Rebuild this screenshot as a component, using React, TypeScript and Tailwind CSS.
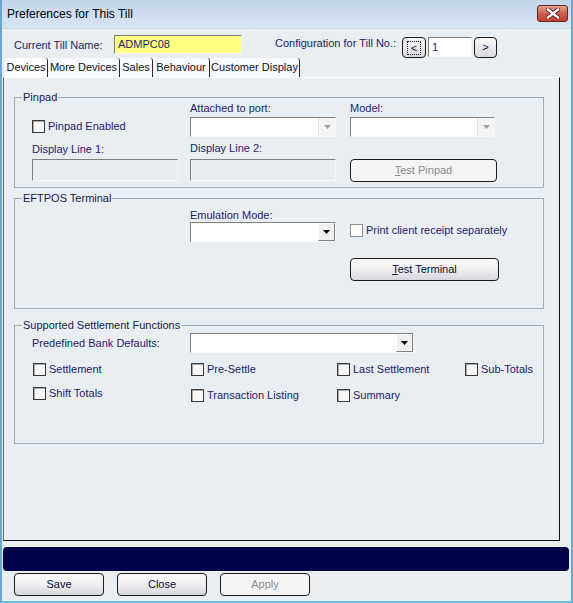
import React from 'react';

// Preferences for This Till — classic WinForms style dialog

const labelCls = 'text-[11px] leading-[13px] text-[#1d1d6b] whitespace-nowrap';
const sunken =
  'border border-t-[#7f7f7f] border-l-[#7f7f7f] border-b-[#f5f7f9] border-r-[#f5f7f9]';

function Check({ light }: { light?: boolean }) {
  return (
    <span
      className={
        light
          ? 'block w-[13px] h-[13px] shrink-0 border border-[#8e8e8e] bg-white'
          : 'block w-[13px] h-[13px] shrink-0 border border-[#3a3a3a] bg-[#f7f7f7] shadow-[inset_1px_1px_0_#a8a8a8]'
      }
    />
  );
}

function CheckItem({ label, className = '' }: { label: string; className?: string }) {
  return (
    <div className={'flex items-center gap-[3px] ' + className}>
      <Check />
      <span className={labelCls}>{label}</span>
    </div>
  );
}

function Combo({ width, disabled }: { width: string; disabled?: boolean }) {
  return (
    <div className={`${width} h-[20px] flex bg-white ${sunken}`}>
      <div className="flex-1" />
      <div
        className={
          disabled
            ? 'w-[17px] h-full flex items-center justify-center bg-[#f4f4f4] border-l border-[#e2e2e2]'
            : 'w-[17px] h-full flex items-center justify-center bg-[#f0f0f0] border border-t-white border-l-white border-b-[#808080] border-r-[#808080]'
        }
      >
        <svg width="7" height="4" viewBox="0 0 7 4">
          <path d="M0 0 L7 0 L3.5 4 Z" fill={disabled ? '#a0a0a0' : '#000'} />
        </svg>
      </div>
    </div>
  );
}

function WinButton({
  children,
  width,
  disabled,
  className = '',
}: {
  children: React.ReactNode;
  width: string;
  disabled?: boolean;
  className?: string;
}) {
  return (
    <div
      className={
        `${width} h-[23px] shrink-0 rounded-[4px] border border-[#1c1c1c] flex items-center justify-center text-[11px] ${className} ` +
        (disabled
          ? 'bg-[#f4f4f4] text-[#8d8d8d]'
          : 'bg-gradient-to-b from-[#fafafa] via-[#eeeef0] to-[#d6d6de] text-[#0c0c3c]')
      }
    >
      {children}
    </div>
  );
}

function GroupBox({
  title,
  className = '',
  children,
}: {
  title: string;
  className?: string;
  children: React.ReactNode;
}) {
  return (
    <fieldset className={'ml-[10px] w-[530px] border border-[#a3abb4] ' + className}>
      <legend className="ml-[7px] px-[1px] text-[11px] leading-[12px] text-[#1a1a4a]">{title}</legend>
      {children}
    </fieldset>
  );
}

const tabs = [
  { label: 'Devices', w: 'w-[43px]', active: true },
  { label: 'More Devices', w: 'w-[72px]' },
  { label: 'Sales', w: 'w-[33px]' },
  { label: 'Behaviour', w: 'w-[57px]' },
  { label: 'Customer Display', w: 'w-[90px]' },
];

export default function App() {
  return (
    <div className="w-[573px] h-[603px] bg-[#e9eef3] flex flex-col border-x-2 border-b-2 border-x-[#6aa7d4] border-b-[#5fc0e0] font-['Liberation_Sans',Arial,sans-serif] overflow-hidden">
      {/* title bar */}
      <div className="h-[29px] shrink-0 flex justify-between bg-gradient-to-b from-[#c2d5eb] to-[#d9e5f2] border-b border-[#c9d7e6]">
        <span className="ml-[5px] mt-[7px] text-[12px] leading-[14px] text-black">Preferences for This Till</span>
        <div className="mr-[3px] mt-[5px] w-[31px] h-[17px] rounded-[3px] border border-[#6b2418] bg-gradient-to-b from-[#e3a194] via-[#d0604c] to-[#c0402c] flex items-center justify-center">
          <svg width="14" height="11" viewBox="0 0 14 11">
            <path d="M2 1.5 L12 9.5 M12 1.5 L2 9.5" stroke="#5a1c12" strokeWidth="4.2" strokeLinecap="square" />
            <path d="M2 1.5 L12 9.5 M12 1.5 L2 9.5" stroke="#ffffff" strokeWidth="2.4" strokeLinecap="square" />
          </svg>
        </div>
      </div>

      {/* till name row */}
      <div className="h-[29px] shrink-0 flex items-start">
        <span className={labelCls + ' w-[100px] ml-[12px] mt-[10px]'}>Current Till Name:</span>
        <div className={`w-[128px] h-[19px] mt-[6px] bg-[#ffff80] ${sunken} flex items-center pl-[3px] text-[11px] text-[#1d1d6b]`}>
          ADMPC08
        </div>
        <span className={labelCls + ' w-[127px] ml-[33px] mt-[8px]'}>Configuration for Till No.:</span>
        <div className="mt-[8px] w-[24px] h-[21px] rounded-[4px] border border-[#1c1c1c] bg-gradient-to-b from-[#fafafa] to-[#d8d8de] flex items-center justify-center">
          <span className="border border-dotted border-[#222] px-[3px] text-[11px] leading-[12px] text-[#0c0c3c]">&lt;</span>
        </div>
        <div className={`ml-[2px] mt-[8px] w-[44px] h-[20px] bg-white ${sunken} flex items-center pl-[3px] text-[11px] text-[#1d1d6b]`}>
          1
        </div>
        <div className="ml-[2px] mt-[8px] w-[23px] h-[21px] rounded-[4px] border border-[#1c1c1c] bg-gradient-to-b from-[#fafafa] to-[#d8d8de] flex items-center justify-center text-[11px] text-[#0c0c3c]">
          &gt;
        </div>
      </div>

      {/* tabs */}
      <div className="h-[19px] shrink-0 flex ml-[3px]">
        {tabs.map((t) => (
          <div
            key={t.label}
            className={`${t.w} h-full flex items-center justify-center text-[11px] text-[#101030] border-r border-[#2a2a2a] rounded-tr-[3px] ${t.active ? 'bg-white' : 'bg-[#f8f9fa]'}`}
          >
            {t.label}
          </div>
        ))}
      </div>

      {/* tab page */}
      <div className="ml-[1px] w-[557px] h-[464px] shrink-0 border-t border-t-white border-l border-l-[#5a6a7a] border-r border-r-[#111] border-b border-b-[#111] flex flex-col">
        <GroupBox title="Pinpad" className="mt-[13px] pb-[5px]">
          <div className="flex pl-[17px] -mt-[1px] h-[13px]">
            <span className="w-[158px]" />
            <span className={labelCls + ' w-[160px]'}>Attached to port:</span>
            <span className={labelCls}>Model:</span>
          </div>
          <div className="flex pl-[17px] mt-[2px] h-[20px]">
            <div className="w-[158px] flex items-start pt-[3px] gap-[3px]">
              <Check />
              <span className={labelCls}>Pinpad Enabled</span>
            </div>
            <div className="w-[160px]">
              <Combo width="w-[146px]" disabled />
            </div>
            <Combo width="w-[145px]" disabled />
          </div>
          <div className="flex pl-[17px] mt-[5px] h-[13px]">
            <span className={labelCls + ' w-[158px] mt-[1px]'}>Display Line 1:</span>
            <span className={labelCls + ' w-[160px]'}>Display Line 2:</span>
          </div>
          <div className="flex pl-[17px] mt-[4px] h-[23px]">
            <div className="w-[158px]">
              <div className={`w-[146px] h-[22px] bg-[#e8edf1] ${sunken}`} />
            </div>
            <div className="w-[160px]">
              <div className={`w-[146px] h-[22px] bg-[#e8edf1] ${sunken}`} />
            </div>
            <WinButton width="w-[147px]" disabled>
              <span>
                <span className="underline">T</span>est Pinpad
              </span>
            </WinButton>
          </div>
        </GroupBox>

        <GroupBox title="EFTPOS Terminal" className="mt-[4px] pb-[27px]">
          <div className="flex pl-[175px] mt-[5px] h-[13px]">
            <span className={labelCls}>Emulation Mode:</span>
          </div>
          <div className="flex pl-[175px] h-[20px]">
            <div className="w-[160px]">
              <Combo width="w-[146px]" />
            </div>
            <div className="flex items-start pt-[2px] gap-[3px]">
              <Check light />
              <span className={labelCls}>Print client receipt separately</span>
            </div>
          </div>
          <div className="flex pl-[335px] mt-[16px]">
            <WinButton width="w-[149px]">
              <span>
                <span className="underline">T</span>est Terminal
              </span>
            </WinButton>
          </div>
        </GroupBox>

        <GroupBox title="Supported Settlement Functions" className="mt-[10px] pb-[41px]">
          <div className="flex items-center pl-[17px] mt-[2px] h-[20px]">
            <span className={labelCls + ' w-[158px]'}>Predefined Bank Defaults:</span>
            <Combo width="w-[224px]" />
          </div>
          <div className="flex pl-[18px] mt-[10px] h-[13px]">
            <CheckItem label="Settlement" className="w-[158px]" />
            <CheckItem label="Pre-Settle" className="w-[146px]" />
            <CheckItem label="Last Settlement" className="w-[128px]" />
            <CheckItem label="Sub-Totals" />
          </div>
          <div className="flex items-start pl-[18px] mt-[11px] h-[15px]">
            <CheckItem label="Shift Totals" className="w-[158px]" />
            <CheckItem label="Transaction Listing" className="w-[146px] mt-[2px]" />
            <CheckItem label="Summary" className="w-[128px] mt-[2px]" />
          </div>
        </GroupBox>
      </div>

      {/* status bar */}
      <div className="ml-[1px] mt-[6px] w-[566px] h-[24px] shrink-0 rounded-[4px] bg-[#02024a]" />

      {/* buttons */}
      <div className="flex mt-[2px] ml-[12px] gap-[13px]">
        <WinButton width="w-[90px]">Save</WinButton>
        <WinButton width="w-[90px]">Close</WinButton>
        <WinButton width="w-[90px]" disabled>
          Apply
        </WinButton>
      </div>
    </div>
  );
}
